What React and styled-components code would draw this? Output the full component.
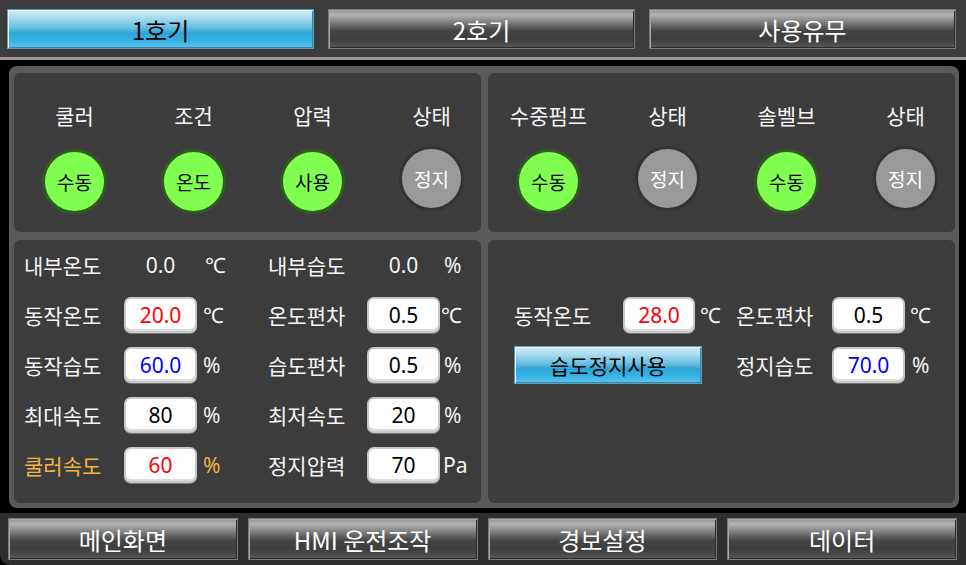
import React from 'react';
import styled, {createGlobalStyle, css} from 'styled-components';

const GlobalStyle = createGlobalStyle`
    html, body {
        margin: 0;
        padding: 0;
        background: #000;
    }
    body {
        font-family: "Noto Sans CJK KR", "Noto Sans", sans-serif;
    }
`

const digits = css`
    font-family: "Noto Sans", "Noto Sans CJK KR", sans-serif;
`

const Screen = styled.div`
    width: 966px;
    height: 565px;
    background: #000;
    display: flex;
    flex-direction: column;
    overflow: hidden;
`

const metal = css`
    background: linear-gradient(to bottom,
        #8e8e8e 0%, #b4b4b4 12%, #8a8a8a 28%, #5c5c5c 45%,
        #444 55%, #3e3e3e 75%, #4a4a4a 88%, #5a5a5a 100%);
    border: 1px solid #7a7a7a;
    box-shadow: inset 1px 1px 0 #a8a8a8, inset -1px -1px 0 #2a2a2a;
    color: #fff;
`

const blue = css`
    background: linear-gradient(to bottom,
        #d4edf6 0%, #a9dcef 20%, #6ec0e0 45%, #2da6d6 60%,
        #35b2e3 80%, #5cc4ec 100%);
    border: 1px solid #5e9fb8;
    box-shadow: inset 1px 1px 0 #e6f6fb, inset -1px -1px 0 #3a86a4;
    color: #000;
`

const Header = styled.div`
    background: #3c3c3c;
    border-bottom: 3px solid #a09898;
    display: grid;
    grid-template-columns: repeat(3, 1fr);
    gap: 14px;
    padding: 9px 10px 0 7px;
    box-sizing: border-box;
    flex: none;
    height: 60px;
`

const TabButton = styled.div`
    height: 40px;
    display: flex;
    align-items: center;
    justify-content: center;
    font-size: 24px;
    box-sizing: border-box;
    ${props => props.active ? blue : metal};
`

const Body = styled.div`
    padding: 6px 7px 0 9px;
    flex: none;
`

const Panel = styled.div`
    background: #5a5a5a;
    border-radius: 8px;
    padding: 7px 4px 5px 5px;
    display: grid;
    grid-template-columns: 467px 467px;
    grid-template-rows: 159px 263px;
    column-gap: 7px;
    row-gap: 8px;
`

const SubPanel = styled.div`
    background: #3c3c3c;
    border-radius: 6px;
`

const StatusGrid = styled(SubPanel)`
    display: grid;
    grid-template-columns: repeat(4, 119px);
    padding-left: 1px;
`

const StatusColumn = styled.div`
    display: flex;
    flex-direction: column;
    align-items: center;
`

const StatusLabel = styled.div`
    color: #f4f4f4;
    font-size: 21px;
    margin-top: 27px;
    height: 30px;
    line-height: 30px;
`

const Lamp = styled.div`
    width: 59px;
    height: 59px;
    border-radius: 50%;
    margin-top: ${props => props.on ? 19 : 16}px;
    display: flex;
    align-items: center;
    justify-content: center;
    font-size: 19px;
    ${props => props.on ? css`
        background: #80ff50;
        border: 3px solid #2f5a22;
        color: #000;
    ` : css`
        background: #999;
        border: 3px solid #333;
        color: #fff;
    `}
`

const FormGrid = styled(SubPanel)`
    display: grid;
    grid-template-columns: 100px 73px 71px 99px 73px 1fr;
    grid-auto-rows: 50px;
    padding-left: 10px;
    align-items: center;
`

const SetGrid = styled(SubPanel)`
    display: grid;
    grid-template-columns: 109px 72px 41px 96px 73px 1fr;
    grid-auto-rows: 50px;
    padding: 50px 0 0 26px;
    align-items: center;
`

const Label = styled.div`
    color: ${props => props.orange ? '#f0b444' : '#f4f4f4'};
    font-size: 21px;
    white-space: nowrap;
`

const Unit = styled(Label)`
    ${digits};
    font-size: 21px;
    padding-left: ${props => props.pad || 6}px;
`

const ReadOut = styled.div`
    ${digits};
    color: #f4f4f4;
    font-size: 21px;
    text-align: center;
`

const ValueBox = styled.div`
    ${digits};
    height: 36px;
    background: #fff;
    border-radius: 7px;
    box-sizing: border-box;
    border: 2px solid #c8c8c8;
    box-shadow: inset 0 -2px 0 #dcdcdc, 0 1px 0 #777;
    display: flex;
    align-items: center;
    justify-content: center;
    font-size: 21px;
    color: ${props => props.color || '#000'};
`

const StopButton = styled.div`
    grid-column: 1 / 4;
    width: 188px;
    height: 38px;
    box-sizing: border-box;
    display: flex;
    align-items: center;
    justify-content: center;
    font-size: 21px;
    ${blue};
`

const Footer = styled.div`
    margin-top: 5px;
    flex: 1;
    background: #2e2e2e;
    border-radius: 0 0 0 10px;
    display: grid;
    grid-template-columns: repeat(4, 1fr);
    gap: 10px;
    padding: 5px 9px 5px 8px;
    box-sizing: border-box;
`

const NavButton = styled.div`
    display: flex;
    align-items: center;
    justify-content: center;
    font-size: 24px;
    box-sizing: border-box;
    ${metal};
`

const leftStatus = [
    {label: '쿨러', text: '수동', on: true},
    {label: '조건', text: '온도', on: true},
    {label: '압력', text: '사용', on: true},
    {label: '상태', text: '정지', on: false},
]

const rightStatus = [
    {label: '수중펌프', text: '수동', on: true},
    {label: '상태', text: '정지', on: false},
    {label: '솔벨브', text: '수동', on: true},
    {label: '상태', text: '정지', on: false},
]

function Status({items}) {
    return (
        <StatusGrid>
            {items.map((item, i) =>
                <StatusColumn key={i}>
                    <StatusLabel>{item.label}</StatusLabel>
                    <Lamp on={item.on}>{item.text}</Lamp>
                </StatusColumn>
            )}
        </StatusGrid>
    )
}

export default function App() {
    return (
        <Screen>
            <GlobalStyle/>
            <Header>
                <TabButton active>1호기</TabButton>
                <TabButton>2호기</TabButton>
                <TabButton>사용유무</TabButton>
            </Header>
            <Body>
                <Panel>
                    <Status items={leftStatus}/>
                    <Status items={rightStatus}/>
                    <FormGrid>
                        <Label>내부온도</Label>
                        <ReadOut>0.0</ReadOut>
                        <Unit pad={8}>℃</Unit>
                        <Label>내부습도</Label>
                        <ReadOut>0.0</ReadOut>
                        <Unit pad={4}>%</Unit>

                        <Label>동작온도</Label>
                        <ValueBox color="#ff0000">20.0</ValueBox>
                        <Unit>℃</Unit>
                        <Label>온도편차</Label>
                        <ValueBox>0.5</ValueBox>
                        <Unit pad={1}>℃</Unit>

                        <Label>동작습도</Label>
                        <ValueBox color="#0000ff">60.0</ValueBox>
                        <Unit>%</Unit>
                        <Label>습도편차</Label>
                        <ValueBox>0.5</ValueBox>
                        <Unit pad={4}>%</Unit>

                        <Label>최대속도</Label>
                        <ValueBox>80</ValueBox>
                        <Unit>%</Unit>
                        <Label>최저속도</Label>
                        <ValueBox>20</ValueBox>
                        <Unit pad={4}>%</Unit>

                        <Label orange>쿨러속도</Label>
                        <ValueBox color="#ff0000">60</ValueBox>
                        <Unit orange>%</Unit>
                        <Label>정지압력</Label>
                        <ValueBox>70</ValueBox>
                        <Unit pad={3}>Pa</Unit>
                    </FormGrid>
                    <SetGrid>
                        <Label>동작온도</Label>
                        <ValueBox color="#ff0000">28.0</ValueBox>
                        <Unit pad={5}>℃</Unit>
                        <Label>온도편차</Label>
                        <ValueBox>0.5</ValueBox>
                        <Unit pad={5}>℃</Unit>

                        <StopButton>습도정지사용</StopButton>
                        <Label>정지습도</Label>
                        <ValueBox color="#0000ff">70.0</ValueBox>
                        <Unit pad={7}>%</Unit>
                    </SetGrid>
                </Panel>
            </Body>
            <Footer>
                <NavButton>메인화면</NavButton>
                <NavButton>HMI 운전조작</NavButton>
                <NavButton>경보설정</NavButton>
                <NavButton>데이터</NavButton>
            </Footer>
        </Screen>
    )
}
